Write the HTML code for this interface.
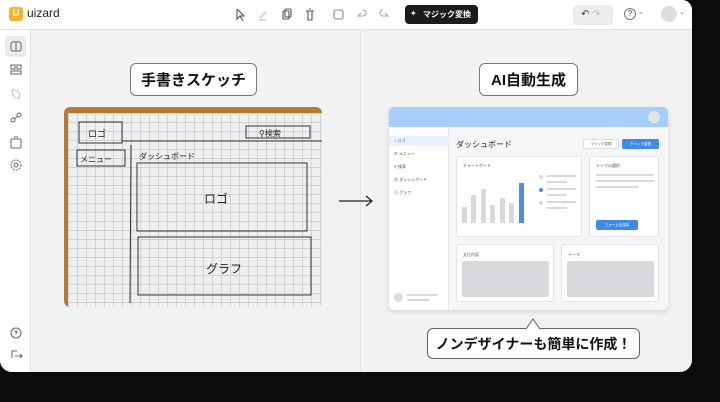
<!DOCTYPE html>
<html><head><meta charset="utf-8"><style>
*{margin:0;padding:0;box-sizing:border-box}
body{width:720px;height:402px;background:#0b0b0b;position:relative;overflow:hidden;font-family:"Liberation Sans","Noto Sans CJK JP",sans-serif}
.win{position:absolute;left:0;top:0;width:692px;height:372px;background:#f2f2f2;border-radius:0 10px 12px 12px;overflow:hidden}
.top{position:absolute;left:0;top:0;width:692px;height:30px;background:#fff;border-bottom:1px solid #e3e3e3}
.side{position:absolute;left:0;top:30px;width:31px;height:342px;background:#fff;border-right:1px solid #e3e3e3}
.abs{position:absolute}
.pill{position:absolute;background:#fff;border:1px solid #777;border-radius:6px;font-weight:bold;font-size:15px;color:#111;display:flex;align-items:center;justify-content:center;white-space:nowrap}
.g{background:#d7d9dc}
.card{position:absolute;background:#fff;border:1px solid #e4e4e4;border-radius:3px}
.t{font-size:4px;color:#555;white-space:nowrap}
</style></head><body>
<div class="win">
<div class="top">
 <div class="abs" style="left:9px;top:7px;width:14px;height:14px;background:#f5b32a;border-radius:3px;color:#fff;font-size:10px;font-weight:bold;text-align:center;line-height:14px">U</div>
 <div class="abs" style="left:27px;top:6px;font-size:12px;color:#222">uizard</div>
 <svg class="abs" style="left:230px;top:6px" width="160" height="18" fill="none" stroke="#555" stroke-width="1.1">
  <path d="M7 3l0 10 3-3 3 5M7 3l7 7-4 0"/>
  <path d="M30 12l6-6" stroke="#bbb"/><path d="M29 14h7" stroke="#bbb"/>
  <rect x="53" y="5" width="6" height="8" rx="1"/><rect x="55" y="3" width="6" height="8" rx="1"/>
  <path d="M76 5h8M78 5v9h4V5M79 3h2"/>
  <rect x="104" y="4" width="9" height="9" rx="2" stroke="#888"/>
  <path d="M131 7l-3 3 3 0M128 10h5a3 3 0 0 0 0-6" stroke="#aaa"/>
  <path d="M155 7l3 3-3 0M158 10h-5a3 3 0 0 1 0-6" stroke="#aaa"/>
 </svg>
 <div class="abs" style="left:405px;top:5px;width:73px;height:19px;background:#1b1b1b;border-radius:4px;color:#fff;font-size:8px;font-weight:bold;line-height:19px;padding-left:18px;white-space:nowrap;overflow:hidden">マジック変換</div>
 <div class="abs" style="left:410px;top:9px;color:#fff;font-size:8px;line-height:10px">✦</div>
 <div class="abs" style="left:573px;top:5px;width:40px;height:20px;background:#ececec;border-radius:4px;font-size:10px;color:#444;line-height:20px;padding-left:8px">↶ <span style="color:#bbb">↷</span></div>
 <div class="abs" style="left:624px;top:8px;width:12px;height:12px;border:1px solid #777;border-radius:50%;font-size:8px;text-align:center;line-height:10px;color:#555">?</div>
 <div class="abs" style="left:638px;top:8px;font-size:7px;color:#777">⌄</div>
 <div class="abs" style="left:661px;top:6px;width:16px;height:16px;background:#ddd;border-radius:50%"></div>
 <div class="abs" style="left:679px;top:8px;font-size:7px;color:#777">⌄</div>
</div>
<div class="side">
 <div class="abs" style="left:5px;top:6px;width:21px;height:21px;background:#ececec;border-radius:4px"></div>
 <svg class="abs" style="left:8px;top:8px" width="16" height="320" fill="none" stroke="#666" stroke-width="1">
  <rect x="3" y="4" width="10" height="9" rx="2"/><path d="M8 4v9"/>
  <rect x="3" y="27" width="4" height="4"/><rect x="9" y="27" width="4" height="4"/><rect x="3" y="33" width="10" height="3"/>
  <ellipse cx="8" cy="56" rx="3" ry="5" transform="rotate(-40 8 56)" stroke="#bbb"/>
  <circle cx="5" cy="82" r="2"/><circle cx="11" cy="77" r="2"/><path d="M6 81l4-3"/>
  <rect x="3" y="101" width="10" height="9" rx="1"/><path d="M6 99h4"/>
  <circle cx="8" cy="127" r="2"/><circle cx="8" cy="127" r="5" stroke-dasharray="2 1"/>
  <circle cx="8" cy="295" r="5"/><path d="M7 294a1 1 0 1 1 1 1v1"/>
  <path d="M9 313h-5v9h5M7 318h7l-2-2M14 318l-2 2"/>
 </svg>
</div>
<div class="abs" style="left:360px;top:31px;width:1px;height:341px;background:#e3e3e3"></div>
<div class="pill" style="left:130px;top:63px;width:127px;height:33px">手書きスケッチ</div>
<div class="pill" style="left:479px;top:63px;width:99px;height:33px">AI自動生成</div>
<!-- sketch photo -->
<div class="abs" style="left:64px;top:107px;width:258px;height:200px;background:#b57a35;border-radius:6px;overflow:hidden">
 <div class="abs" style="left:4px;top:6px;width:254px;height:194px;background-color:#efefed;background-image:linear-gradient(#d2d2d2 1px,transparent 1px),linear-gradient(90deg,#d2d2d2 1px,transparent 1px);background-size:9px 9px"></div>
 <svg class="abs" style="left:0;top:0" width="258" height="200" fill="none" stroke="#333" stroke-width="1">
  <rect x="15" y="15" width="43" height="21"/><rect x="182" y="19" width="64" height="12"/>
  <path d="M58 34L258 34"/><rect x="13" y="43" width="48" height="16"/>
  <path d="M67 38L66 196"/><rect x="73" y="56" width="170" height="68"/><rect x="74" y="130" width="173" height="58"/>
  <text x="24" y="30" font-size="9" fill="#222" stroke="none">ロゴ</text>
  <text x="195" y="29" font-size="8" fill="#222" stroke="none">⚲検索</text>
  <text x="16" y="55" font-size="8" fill="#222" stroke="none">メニュー</text>
  <text x="75" y="52" font-size="8" fill="#222" stroke="none">ダッシュボード</text>
  <text x="140" y="96" font-size="12" fill="#222" stroke="none">ロゴ</text>
  <text x="142" y="166" font-size="12" fill="#222" stroke="none">グラフ</text>
 </svg>
</div>
<!-- arrow -->
<svg class="abs" style="left:337px;top:193px" width="40" height="16" fill="none" stroke="#222" stroke-width="1.3"><path d="M2 8h33M29 3l6 5-6 5"/></svg>
<!-- mock -->
<div class="abs" style="left:389px;top:107px;width:279px;height:203px;background:#f6f6f7;border-radius:5px;overflow:hidden;box-shadow:0 2px 6px rgba(0,0,0,.12)">
 <div class="abs" style="left:0;top:0;width:279px;height:20px;background:#a6cefa"></div>
 <div class="abs" style="left:259px;top:4px;width:12px;height:12px;border-radius:50%;background:#e4e4e4"></div>
 <div class="abs" style="left:0;top:20px;width:60px;height:183px;background:#fff;border-right:1px solid #e4e4e4">
  <div class="abs" style="left:0;top:9px;width:60px;height:10px;background:#e8f1fd"></div>
  <div class="abs t" style="left:5px;top:11px;color:#3a7bd5">⌂ ロゴ</div>
  <div class="abs t" style="left:5px;top:24px">☰ メニュー</div>
  <div class="abs t" style="left:5px;top:37px">⚲ 検索</div>
  <div class="abs t" style="left:5px;top:50px">▦ ダッシュボード</div>
  <div class="abs t" style="left:5px;top:63px">▤ グラフ</div>
  <div class="abs" style="left:5px;top:166px;width:9px;height:9px;border-radius:50%;background:#ddd"></div>
  <div class="abs g" style="left:18px;top:167px;width:31px;height:2px"></div>
  <div class="abs g" style="left:18px;top:172px;width:22px;height:2px"></div>
 </div>
 <div class="abs" style="left:67px;top:32px;font-size:8px;color:#222">ダッシュボード</div>
 <div class="abs" style="left:194px;top:32px;width:36px;height:10px;background:#fff;border:1px solid #ddd;border-radius:2px;font-size:3.5px;text-align:center;line-height:9px;color:#555">マジック変換</div>
 <div class="abs" style="left:233px;top:32px;width:37px;height:10px;background:#3f8ce6;border-radius:2px;font-size:3.5px;text-align:center;line-height:10px;color:#fff">クイック変換</div>
 <div class="card" style="left:67px;top:49px;width:126px;height:81px">
  <div class="abs t" style="left:6px;top:6px">チャートボード</div>
  <div class="abs g" style="left:5px;top:50px;width:5px;height:16px"></div>
  <div class="abs g" style="left:14px;top:38px;width:5px;height:28px"></div>
  <div class="abs g" style="left:24px;top:32px;width:5px;height:34px"></div>
  <div class="abs g" style="left:33px;top:48px;width:5px;height:18px"></div>
  <div class="abs g" style="left:43px;top:41px;width:5px;height:25px"></div>
  <div class="abs g" style="left:52px;top:46px;width:5px;height:20px"></div>
  <div class="abs" style="left:62px;top:26px;width:5px;height:40px;background:#4a90e2"></div>
  <div class="abs g" style="left:82px;top:18px;width:4px;height:4px;border-radius:50%"></div>
  <div class="abs" style="left:82px;top:31px;width:4px;height:4px;border-radius:50%;background:#4a90e2"></div>
  <div class="abs g" style="left:82px;top:44px;width:4px;height:4px;border-radius:50%"></div>
  <div class="abs g" style="left:90px;top:18px;width:29px;height:2px"></div><div class="abs g" style="left:90px;top:24px;width:20px;height:2px"></div>
  <div class="abs g" style="left:90px;top:31px;width:29px;height:2px"></div><div class="abs g" style="left:90px;top:37px;width:20px;height:2px"></div>
  <div class="abs g" style="left:90px;top:44px;width:29px;height:2px"></div><div class="abs g" style="left:90px;top:50px;width:20px;height:2px"></div>
 </div>
 <div class="card" style="left:200px;top:49px;width:70px;height:81px">
  <div class="abs t" style="left:6px;top:6px">テーマの選択</div>
  <div class="abs g" style="left:6px;top:17px;width:58px;height:2px"></div>
  <div class="abs g" style="left:6px;top:23px;width:58px;height:2px"></div>
  <div class="abs g" style="left:6px;top:29px;width:43px;height:2px"></div>
  <div class="abs" style="left:6px;top:63px;width:42px;height:10px;background:#3f8ce6;border-radius:2px;font-size:3.5px;color:#fff;text-align:center;line-height:10px">フォームを保存</div>
 </div>
 <div class="card" style="left:67px;top:137px;width:98px;height:58px">
  <div class="abs t" style="left:6px;top:7px">文化内容</div>
  <div class="abs g" style="left:5px;top:16px;width:87px;height:36px;border-radius:2px"></div>
 </div>
 <div class="card" style="left:172px;top:137px;width:98px;height:58px">
  <div class="abs t" style="left:6px;top:7px">テーマ</div>
  <div class="abs g" style="left:5px;top:16px;width:87px;height:36px;border-radius:2px"></div>
 </div>
</div>
<div class="pill" style="left:427px;top:328px;width:213px;height:31px;font-size:14px;border-color:#666">ノンデザイナーも簡単に作成！</div>
<svg class="abs" style="left:526px;top:318px" width="15" height="12"><path d="M0 11L7 1 14 11" fill="#fff" stroke="#666" stroke-width="1"/><path d="M1 11.5h12" stroke="#fff" stroke-width="2"/></svg>
</div>
</body></html>
